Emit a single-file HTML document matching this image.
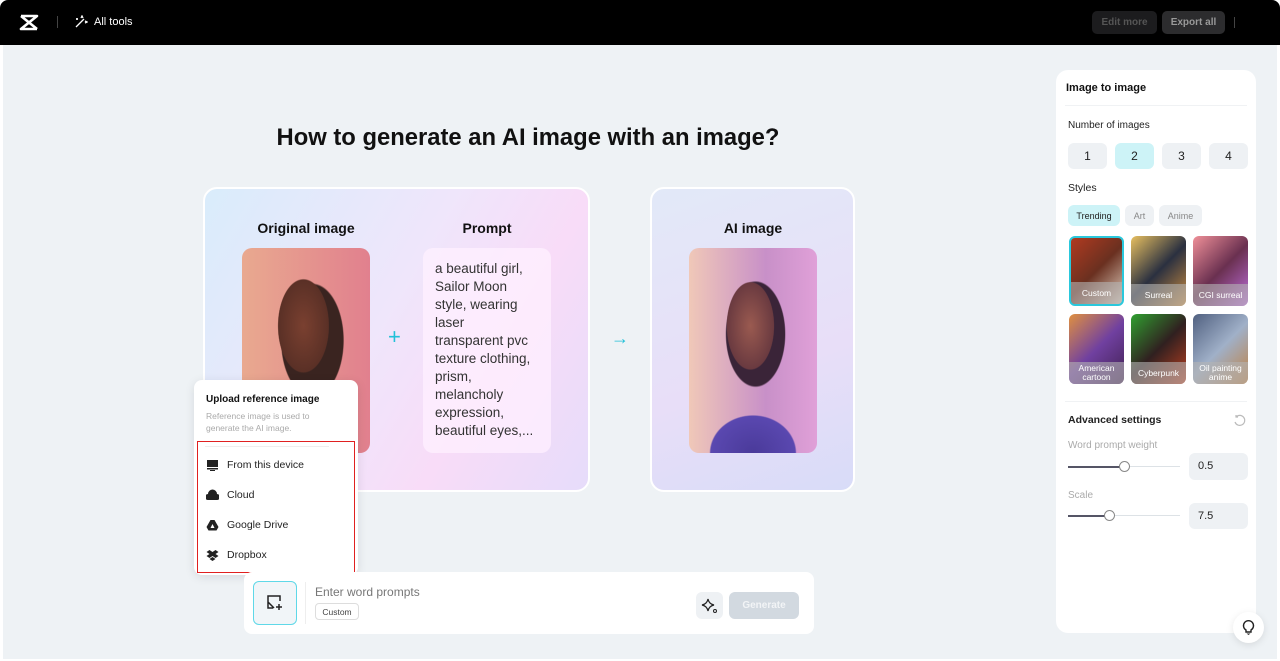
<!DOCTYPE html>
<html><head><meta charset="utf-8"><style>
*{box-sizing:border-box;margin:0;padding:0}
body{width:1280px;height:661px;overflow:hidden;background:#fff;font-family:"Liberation Sans",sans-serif;position:relative}
.top{position:absolute;left:0;top:0;width:1280px;height:45px;background:#000;border-radius:8px 8px 0 0}
.main{position:absolute;left:3px;top:45px;width:1274px;height:614px;background:#eef2f5}
.abs{position:absolute}
.btn{position:absolute;top:11px;height:23px;border-radius:5px;font-size:10px;font-weight:bold;display:flex;align-items:center;justify-content:center}
.card{position:absolute;border-radius:14px;border:2px solid #fff;overflow:hidden}
.h{position:absolute;font-size:14px;font-weight:bold;color:#111;text-align:center}
.panel{position:absolute;left:1056px;top:70px;width:200px;height:563px;background:#fff;border-radius:12px}
.lbl{position:absolute;font-size:11px;color:#222}
.num{position:absolute;top:143px;width:39px;height:26px;background:#eef1f4;border-radius:6px;font-size:12px;display:flex;align-items:center;justify-content:center;color:#222}
.tag{position:absolute;top:205px;height:21px;border-radius:6px;font-size:9px;display:flex;align-items:center;justify-content:center;color:#888;background:#eef1f4}
.th{position:absolute;width:55px;height:70px;border-radius:6px;overflow:hidden}
.th span{position:absolute;left:0;right:0;bottom:0;height:22px;background:rgba(180,180,180,.6);color:#fff;font-size:8.5px;display:flex;align-items:center;justify-content:center;text-align:center;line-height:9px}
.mi{position:absolute;left:206px;font-size:10.5px;color:#222;display:flex;align-items:center;gap:8px}
</style></head><body>
<div class="top">
 <svg class="abs" style="left:19px;top:14px" width="20" height="17" viewBox="0 0 20 17"><path d="M2 2h16L2 15h16M2 2l16 13" stroke="#fff" stroke-width="2.6" fill="none" stroke-linejoin="round"/></svg>
 <div class="abs" style="left:57px;top:16px;width:1px;height:12px;background:#444"></div>
 <svg class="abs" style="left:74px;top:15px" width="14" height="14" viewBox="0 0 14 14"><path d="M2 12L10 4M7 3l1-2 1 2M11 6l2 1-2 1M3 3v2M2 4h2" stroke="#fff" stroke-width="1.3" fill="none"/></svg>
 <div class="abs" style="left:94px;top:16px;color:#fff;font-size:11px">All tools</div>
 <div class="btn" style="left:1092px;width:65px;background:#1c1c1e;color:#555">Edit more</div>
 <div class="btn" style="left:1162px;width:63px;background:#2c2c2e;color:#999">Export all</div>
 <div class="abs" style="left:1234px;top:17px;width:1px;height:11px;background:#444"></div>
</div>
<div class="main"></div>
<div class="abs" style="left:0;top:124px;width:1056px;text-align:center;font-size:23.8px;font-weight:bold;color:#111">How to generate an AI image with an image?</div>
<div class="card" style="left:203px;top:187px;width:387px;height:305px;background:linear-gradient(120deg,#d9ecfb 0%,#efe6fb 45%,#f8dcf8 70%,#e6dcfa 100%)"></div>
<div class="h" style="left:242px;top:220px;width:128px">Original image</div>
<div class="h" style="left:423px;top:220px;width:128px">Prompt</div>
<div class="abs" style="left:242px;top:248px;width:128px;height:205px;border-radius:10px;background:radial-gradient(ellipse 28% 32% at 48% 38%,#7a4030 0%,#5a3026 70%,transparent 72%),radial-gradient(ellipse 40% 45% at 55% 45%,#3a2420 0%,#3a2420 60%,transparent 62%),radial-gradient(ellipse 50% 30% at 60% 100%,#6b5bc4 0%,#6b5bc4 60%,transparent 62%),linear-gradient(90deg,#e9a98f,#e1808e)"></div>
<div class="abs" style="left:388px;top:324px;color:#22c0d8;font-size:22px;font-weight:300">+</div>
<div class="abs" style="left:423px;top:248px;width:128px;height:205px;border-radius:10px;background:rgba(255,240,255,.75);padding:12px 9px 12px 12px;font-size:13.5px;line-height:18px;color:#333;white-space:nowrap">a beautiful girl,<br>Sailor Moon<br>style, wearing<br>laser<br>transparent pvc<br>texture clothing,<br>prism,<br>melancholy<br>expression,<br>beautiful eyes,...</div>
<div class="abs" style="left:611px;top:328px;color:#22c0d8;font-size:18px">→</div>
<div class="card" style="left:650px;top:187px;width:205px;height:305px;background:linear-gradient(160deg,#e2e9f8,#e8def8 60%,#d8dcf8)"></div>
<div class="h" style="left:689px;top:220px;width:128px">AI image</div>
<div class="abs" style="left:689px;top:248px;width:128px;height:205px;border-radius:10px;background:radial-gradient(ellipse 26% 30% at 48% 38%,#9a5a50 0%,#6a3a40 70%,transparent 72%),radial-gradient(ellipse 38% 42% at 52% 42%,#3a2438 0%,#3a2438 60%,transparent 62%),radial-gradient(ellipse 55% 30% at 50% 100%,#4a3a9a 0%,#5a48b0 60%,transparent 62%),linear-gradient(90deg,#f0c8b8,#c890c8 60%,#e0a0d8)"></div>

<div class="abs" style="left:194px;top:380px;width:164px;height:195px;background:#fff;border-radius:8px;box-shadow:0 2px 10px rgba(0,0,0,.1)"></div>
<div class="abs" style="left:206px;top:394px;font-size:10px;font-weight:bold;color:#111">Upload reference image</div>
<div class="abs" style="left:206px;top:410px;font-size:8.5px;color:#aaa;line-height:12px">Reference image is used to<br>generate the AI image.</div>
<div class="abs" style="left:197px;top:441px;width:158px;height:132px;border:1.5px solid #e02020"></div>
<div class="abs" style="left:205px;top:446px;width:124px;height:1px;background:#eee"></div>
<div class="mi" style="top:459px"><svg width="13" height="12"><rect x="1" y="1" width="11" height="7" fill="#222"/><rect x="1" y="9" width="11" height="1.5" fill="#222"/><rect x="4" y="11" width="5" height="1" fill="#222"/></svg>From this device</div>
<div class="mi" style="top:489px"><svg width="13" height="12"><path d="M2 11a3 3 0 010-6 4.5 4.5 0 019 0 3 3 0 010 6z" fill="#222"/></svg>Cloud</div>
<div class="mi" style="top:519px"><svg width="13" height="12"><path d="M4.5 1h4l4 7-2 3.5h-8L.5 8zM6.5 5L4.5 9h4z" fill="#222" fill-rule="evenodd"/></svg>Google Drive</div>
<div class="mi" style="top:549px"><svg width="13" height="12"><path d="M3.5 1L0.5 3l3 2-3 2 3 2 3-2 3 2 3-2-3-2 3-2-3-2-3 2zM3.5 10l3 2 3-2-3-2z" fill="#222"/></svg>Dropbox</div>

<div class="abs" style="left:244px;top:572px;width:570px;height:62px;background:#fff;border-radius:8px"></div>
<div class="abs" style="left:253px;top:581px;width:44px;height:44px;border:1.5px solid #5fd8e8;border-radius:6px;background:#f1f5f8"></div>
<svg class="abs" style="left:266px;top:594px" width="18" height="18" viewBox="0 0 18 18"><path d="M10 2H2v12h5M2 8l6 6M14 7V2h-4" stroke="#222" stroke-width="1.5" fill="none"/><path d="M13 10v6M10 13h6" stroke="#222" stroke-width="1.5"/></svg>
<div class="abs" style="left:305px;top:582px;width:1px;height:42px;background:#eee"></div>
<div class="abs" style="left:315px;top:585px;font-size:12px;color:#777">Enter word prompts</div>
<div class="abs" style="left:315px;top:603px;width:44px;height:17px;border:1px solid #ddd;border-radius:4px;font-size:8.5px;color:#444;display:flex;align-items:center;justify-content:center">Custom</div>
<div class="abs" style="left:696px;top:592px;width:27px;height:27px;background:#eef1f4;border-radius:6px"></div>
<svg class="abs" style="left:701px;top:597px" width="17" height="17" viewBox="0 0 17 17"><path d="M7 2q1 5 6 6-5 1-6 6-1-5-6-6 5-1 6-6z" stroke="#222" stroke-width="1.2" fill="none"/><circle cx="14" cy="14" r="1.5" stroke="#222" fill="none"/></svg>
<div class="abs" style="left:729px;top:592px;width:70px;height:27px;background:#d2d9e0;border-radius:6px;color:#f2f4f6;font-size:10px;font-weight:bold;display:flex;align-items:center;justify-content:center">Generate</div>

<div class="panel"></div>
<div class="abs" style="left:1066px;top:82px;font-size:11px;font-weight:bold;color:#111">Image to image</div>
<div class="abs" style="left:1065px;top:105px;width:182px;height:1px;background:#f0f2f4"></div>
<div class="lbl" style="left:1068px;top:120px;font-size:10px">Number of images</div>
<div class="num" style="left:1068px">1</div>
<div class="num" style="left:1115px;background:#cdf3f7">2</div>
<div class="num" style="left:1162px">3</div>
<div class="num" style="left:1209px">4</div>
<div class="lbl" style="left:1068px;top:182px;font-size:10.5px">Styles</div>
<div class="tag" style="left:1068px;width:52px;background:#cdf3f7;color:#222">Trending</div>
<div class="tag" style="left:1125px;width:29px">Art</div>
<div class="tag" style="left:1159px;width:43px">Anime</div>
<div class="th" style="left:1069px;top:236px;border:2px solid #2ac8dc;background:linear-gradient(135deg,#b03a20,#6a3020 50%,#e0d0c0)"><span>Custom</span></div>
<div class="th" style="left:1131px;top:236px;background:linear-gradient(135deg,#e8c060,#2a3040 50%,#d09040)"><span>Surreal</span></div>
<div class="th" style="left:1193px;top:236px;background:linear-gradient(135deg,#f09098,#6a3050 50%,#c070e0)"><span>CGI surreal</span></div>
<div class="th" style="left:1069px;top:314px;background:linear-gradient(135deg,#e09040,#7040a0 50%,#402050)"><span>American<br>cartoon</span></div>
<div class="th" style="left:1131px;top:314px;background:linear-gradient(135deg,#30a030,#302020 50%,#c04020)"><span>Cyberpunk</span></div>
<div class="th" style="left:1193px;top:314px;background:linear-gradient(135deg,#506080,#a0b0c8 50%,#c08040)"><span>Oil painting<br>anime</span></div>
<div class="abs" style="left:1065px;top:401px;width:182px;height:1px;background:#f0f2f4"></div>
<div class="lbl" style="left:1068px;top:414px;font-size:10.5px;font-weight:bold">Advanced settings</div>
<svg class="abs" style="left:1233px;top:414px" width="13" height="13" viewBox="0 0 13 13"><path d="M3 3a5 5 0 11-1 5M3 1v2h2" stroke="#bbb" stroke-width="1.2" fill="none"/></svg>
<div class="lbl" style="left:1068px;top:440px;font-size:10px;color:#aaa">Word prompt weight</div>
<div class="abs" style="left:1068px;top:466px;width:112px;height:1px;background:#dde2e6"></div>
<div class="abs" style="left:1068px;top:466px;width:56px;height:1.5px;background:#556"></div>
<div class="abs" style="left:1119px;top:461px;width:11px;height:11px;border-radius:50%;border:1px solid #888;background:#fff"></div>
<div class="abs" style="left:1189px;top:453px;width:59px;height:27px;background:#eef1f4;border-radius:6px;font-size:11px;color:#222;padding:7px 9px">0.5</div>
<div class="lbl" style="left:1068px;top:490px;font-size:10px;color:#aaa">Scale</div>
<div class="abs" style="left:1068px;top:515px;width:112px;height:1px;background:#dde2e6"></div>
<div class="abs" style="left:1068px;top:515px;width:42px;height:1.5px;background:#556"></div>
<div class="abs" style="left:1104px;top:510px;width:11px;height:11px;border-radius:50%;border:1px solid #888;background:#fff"></div>
<div class="abs" style="left:1189px;top:503px;width:59px;height:26px;background:#eef1f4;border-radius:6px;font-size:11px;color:#222;padding:7px 9px">7.5</div>
<div class="abs" style="left:1233px;top:612px;width:31px;height:31px;border-radius:50%;background:#fff;box-shadow:0 2px 8px rgba(0,0,0,.1)"></div>
<svg class="abs" style="left:1242px;top:619px" width="13" height="17" viewBox="0 0 13 17"><path d="M4 11a5 5 0 115 0v2H4z" stroke="#222" stroke-width="1.4" fill="none"/><path d="M4.5 14.5h4l-2 1.5z" fill="#222"/></svg>
</body></html>
